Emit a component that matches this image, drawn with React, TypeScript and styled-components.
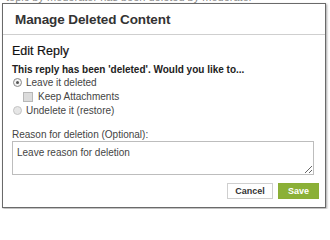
import React from 'react';
import styled, { createGlobalStyle } from 'styled-components';

const GlobalStyle = createGlobalStyle`
  html, body {
    margin: 0;
    padding: 0;
    background: #fff;
    overflow: hidden;
  }
  body {
    font-family: 'Liberation Sans', Arial, sans-serif;
  }
`;

const Page = styled.div`
  position: relative;
  width: 330px;
  height: 209px;
  overflow: hidden;
  background: #fff;
`;

const BackdropText = styled.div`
  margin-top: -9px;
  padding-left: 6px;
  font-size: 11px;
  line-height: 12px;
  color: #8a8a8a;
  white-space: nowrap;
`;

// the dialog sits over the page content
const Modal = styled.div`
  position: absolute;
  left: 2px;
  top: 3px;
  width: 322px;
  height: 203px;
  display: flex;
  flex-direction: column;
  background: #fff;
  border: 1px solid #6a6a6a;
  box-shadow: 1px 1px 2px rgba(0, 0, 0, 0.35);
`;

const Header = styled.div`
  height: 30px;
  display: flex;
  align-items: center;
  padding-left: 12px;
  border-bottom: 1px solid #cfcfcf;
`;

const Title = styled.h1`
  margin: 0;
  font-size: 13.5px;
  font-weight: bold;
  color: #333;
  letter-spacing: -0.1px;
`;

const Body = styled.div`
  flex: 1;
  display: flex;
  flex-direction: column;
  padding: 9px 11px 0 9px;
`;

const SubTitle = styled.h2`
  margin: 0;
  font-size: 12.5px;
  line-height: 15px;
  font-weight: normal;
  color: #111;
  -webkit-text-stroke: 0.2px #111;
`;

const Question = styled.p`
  margin: 5px 0 0;
  font-size: 10px;
  line-height: 12px;
  font-weight: bold;
  color: #222;
`;

const OptionRow = styled.label<{ $indent?: number; $h?: number }>`
  display: flex;
  align-items: center;
  height: ${(p) => p.$h ?? 13}px;
  padding-left: ${(p) => p.$indent ?? 1}px;
  font-size: 10px;
  color: #444;
`;

const RadioMark = styled.span<{ $checked?: boolean }>`
  position: relative;
  width: 7px;
  height: 7px;
  margin-right: 4px;
  border-radius: 50%;
  border: 1px solid ${(p) => (p.$checked ? '#8a8a8a' : '#c4c4c4')};
  background: ${(p) => (p.$checked ? '#f2f2f2' : '#e6e6e6')};

  &::after {
    content: '';
    display: ${(p) => (p.$checked ? 'block' : 'none')};
    position: absolute;
    left: 2px;
    top: 2px;
    width: 3px;
    height: 3px;
    border-radius: 50%;
    background: #555;
  }
`;

const CheckMark = styled.span`
  width: 8px;
  height: 8px;
  margin-right: 5px;
  border: 1px solid #b8b8b8;
  background: #dcdcdc;
`;

const FieldLabel = styled.div`
  margin-top: 12px;
  font-size: 10px;
  line-height: 12px;
  color: #444;
`;

const Reason = styled.textarea`
  box-sizing: border-box;
  width: 302px;
  height: 34px;
  margin: 0;
  padding: 5px 4px;
  border: 1px solid #bdbdbd;
  border-radius: 0;
  font-family: 'Liberation Sans', Arial, sans-serif;
  font-size: 10px;
  line-height: 12px;
  color: #333;
  outline: none;

  &::placeholder {
    color: #444;
    opacity: 1;
  }
`;

const Actions = styled.div`
  display: flex;
  justify-content: flex-end;
  gap: 5px;
  margin-top: 8px;
  margin-right: -5px;
`;

const Button = styled.button<{ $primary?: boolean }>`
  height: 16px;
  padding: 0;
  width: ${(p) => (p.$primary ? 41 : 46)}px;
  border: 1px solid ${(p) => (p.$primary ? '#8bae35' : '#cfcfcf')};
  background: ${(p) => (p.$primary ? '#8bb037' : '#fff')};
  color: ${(p) => (p.$primary ? '#fff' : '#333')};
  font-family: 'Liberation Sans Narrow', 'Liberation Sans', Arial, sans-serif;
  font-size: 9px;
  font-weight: bold;
  cursor: pointer;
`;

export default function App() {
  return (
    <Page>
      <GlobalStyle />
      <BackdropText>topic by moderator has been deleted by moderator</BackdropText>
      <Modal>
        <Header>
          <Title>Manage Deleted Content</Title>
        </Header>
        <Body>
          <SubTitle>Edit Reply</SubTitle>
          <Question>This reply has been 'deleted'. Would you like to...</Question>
          <OptionRow $h={13}>
            <RadioMark $checked />
            Leave it deleted
          </OptionRow>
          <OptionRow $indent={11} $h={15}>
            <CheckMark />
            Keep Attachments
          </OptionRow>
          <OptionRow $h={13}>
            <RadioMark />
            Undelete it (restore)
          </OptionRow>
          <FieldLabel>Reason for deletion (Optional):</FieldLabel>
          <Reason placeholder="Leave reason for deletion" />
          <Actions>
            <Button>Cancel</Button>
            <Button $primary>Save</Button>
          </Actions>
        </Body>
      </Modal>
    </Page>
  );
}
